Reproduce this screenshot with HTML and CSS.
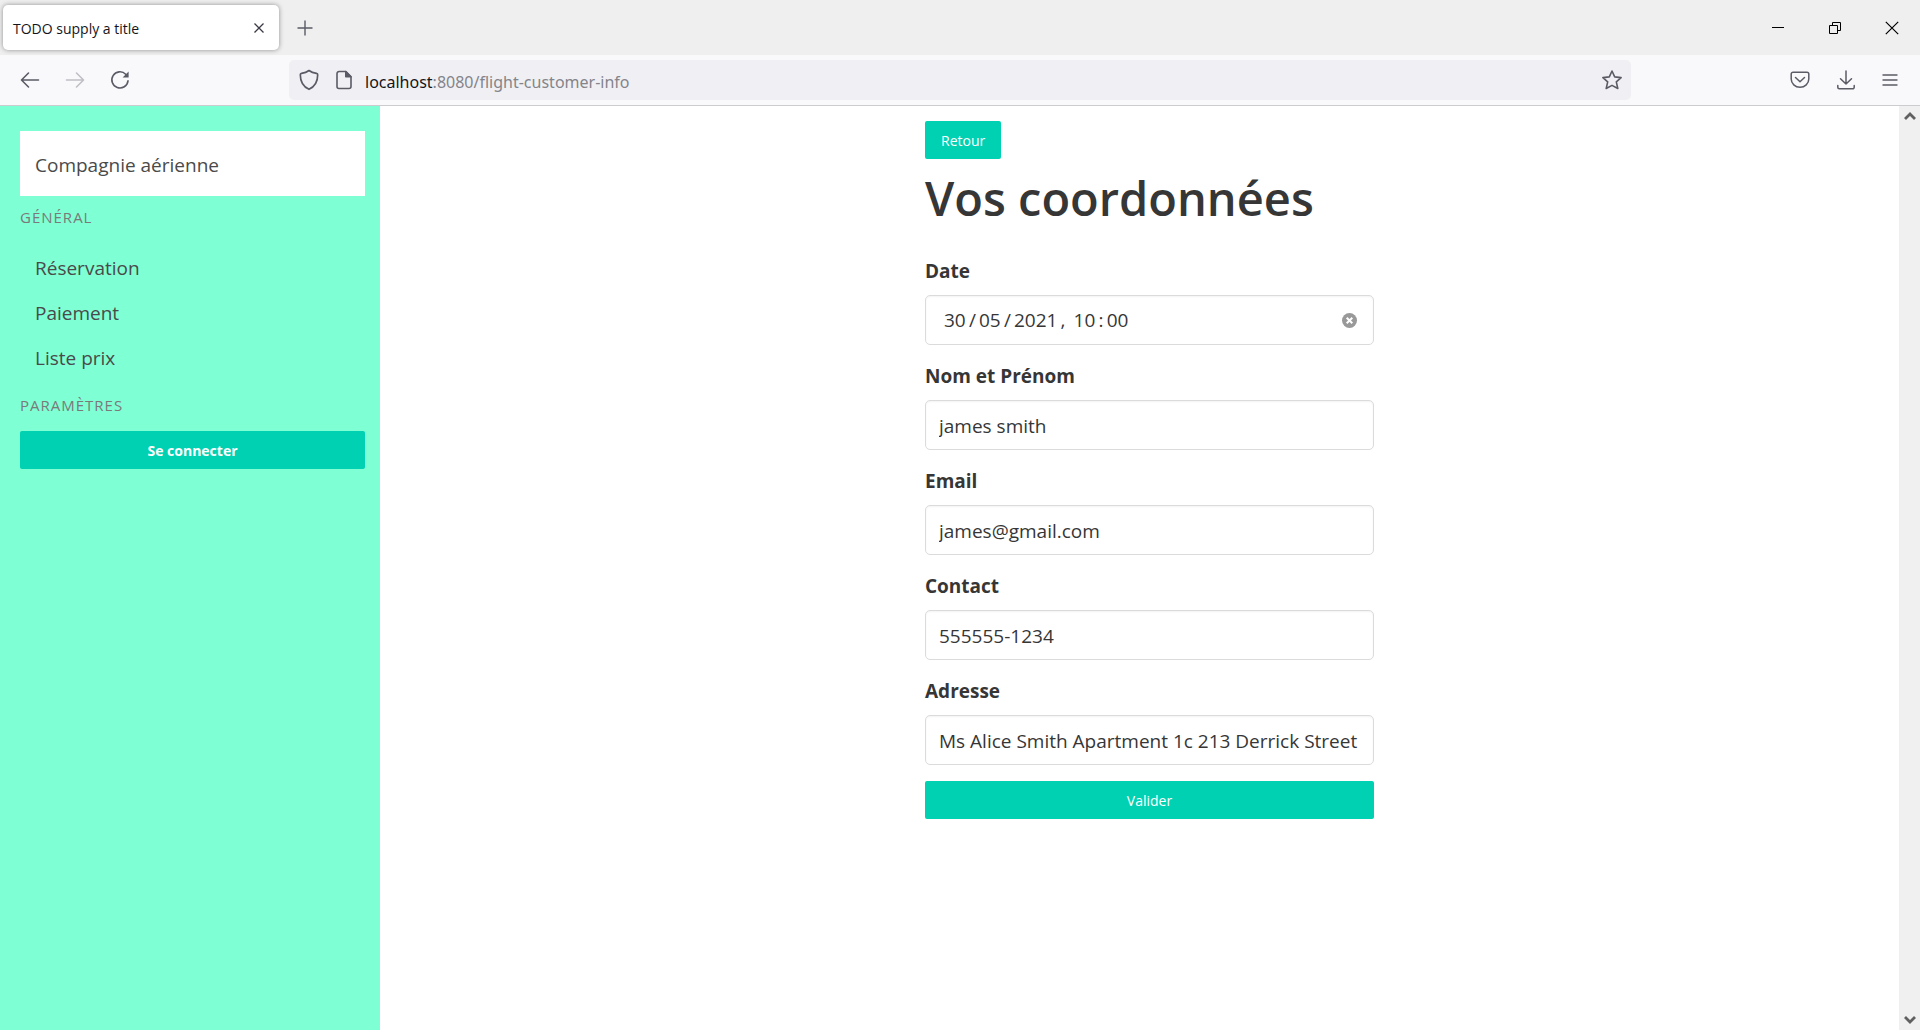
FILE: index.html
```html
<!DOCTYPE html>
<html lang="fr">
<head>
<meta charset="utf-8">
<meta name="viewport" content="width=device-width, initial-scale=1">
<title>TODO supply a title</title>
<link rel="stylesheet" href="styles.css">
</head>
<body>
<div class="browser">
  <header class="chrome">
    <div class="tab-bar">
      <div class="tab">
        <span class="tab-title">TODO supply a title</span>
        <button class="icon-button tab-close" type="button" aria-label="Fermer l'onglet">
          <svg width="12" height="12" viewBox="0 0 12 12" fill="none" stroke="#3a3944" stroke-width="1.3"><path d="M1.5 1.5l9 9M10.5 1.5l-9 9"/></svg>
        </button>
      </div>
      <button class="icon-button new-tab" type="button" aria-label="Nouvel onglet">
        <svg width="16" height="16" viewBox="0 0 16 16" fill="none" stroke="#5b5b66" stroke-width="1.4"><path d="M8 .5v15M.5 8h15"/></svg>
      </button>
      <div class="window-controls">
        <button class="icon-button" type="button" aria-label="Réduire">
          <svg width="12" height="12" viewBox="0 0 12 12" fill="none" stroke="#000"><path d="M0 5.500h12"/></svg>
        </button>
        <button class="icon-button" type="button" aria-label="Restaurer">
          <svg width="12" height="12" viewBox="0 0 12 12" fill="none" stroke="#000"><path d="M.5 3.500h8v8h-8zM3.500 3.500v-3h8v8h-3"/></svg>
        </button>
        <button class="icon-button" type="button" aria-label="Fermer">
          <svg width="14" height="14" viewBox="0 0 14 14" fill="none" stroke="#000" stroke-width="1.2"><path d="M.8.8l12.400 12.400M13.200.8L.8 13.200"/></svg>
        </button>
      </div>
    </div>
    <div class="toolbar">
      <div class="nav-buttons">
        <button class="icon-button" type="button" aria-label="Précédent">
          <svg width="20" height="20" viewBox="0 0 20 20" fill="none" stroke="#5b5b66" stroke-width="1.600" stroke-linecap="round" stroke-linejoin="round"><path d="M18.500 10H1.800M8.500 3L1.500 10l7 7"/></svg>
        </button>
        <button class="icon-button" type="button" aria-label="Suivant" disabled>
          <svg width="20" height="20" viewBox="0 0 20 20" fill="none" stroke="#bfbfc5" stroke-width="1.600" stroke-linecap="round" stroke-linejoin="round"><path d="M1.500 10h16.700M11.500 3l7 7-7 7"/></svg>
        </button>
        <button class="icon-button" type="button" aria-label="Actualiser">
          <svg width="20" height="20" viewBox="0 0 20 20" fill="none" stroke="#5b5b66" stroke-width="1.600" stroke-linecap="round"><path d="M18 10.800a8.100 8.100 0 1 1-2.300-6.600l1.300 1.300"/><path d="M18.600 1.500v6h-6z" fill="#5b5b66" stroke="none"/></svg>
        </button>
      </div>
      <div class="address-bar">
        <svg width="20" height="22" viewBox="0 0 20 22" fill="none" stroke="#5b5b66" stroke-width="1.700" stroke-linejoin="round"><path d="M10 1.500C8 3 4.800 4 2.500 4.300c-.8.100-1.200.6-1.200 1.400 0 7 3.100 12 8.700 14.600 5.600-2.600 8.700-7.600 8.700-14.600 0-.8-.4-1.300-1.200-1.400C15.200 4 12 3 10 1.500z"/></svg>
        <svg width="16" height="20" viewBox="0 0 16 20" fill="none" stroke="#5b5b66" stroke-width="1.600" stroke-linejoin="round"><path d="M9.800 1.500H3a2 2 0 0 0-2 2v13a2 2 0 0 0 2 2h10a2 2 0 0 0 2-2V6.700z"/><path d="M9.800 1.500v5.200H15z" fill="#5b5b66"/></svg>
        <div class="url" role="textbox" aria-label="Adresse"><span class="url-host">localhost</span>:8080/flight-customer-info</div>
        <button class="icon-button" type="button" aria-label="Marquer cette page">
          <svg width="20" height="20" viewBox="0 0 20 20" fill="none" stroke="#5b5b66" stroke-width="1.600" stroke-linejoin="round"><path d="M10 1l2.700 5.900 6.400.7-4.800 4.300 1.500 6.600L10 15.400l-5.800 3.100 1.500-6.600L.9 7.600l6.400-.7z"/></svg>
        </button>
      </div>
      <div class="tool-buttons">
        <button class="icon-button" type="button" aria-label="Pocket">
          <svg width="20" height="18" viewBox="0 0 20 18" fill="none" stroke="#5b5b66" stroke-width="1.500" stroke-linecap="round" stroke-linejoin="round"><path d="M3 1.300h14a1.800 1.800 0 0 1 1.800 1.800V8a8.800 8.300 0 0 1-17.600 0V3.100A1.800 1.800 0 0 1 3 1.300z"/><path d="M5.500 6.500L10 10.700l4.500-4.200"/></svg>
        </button>
        <button class="icon-button" type="button" aria-label="Téléchargements">
          <svg width="20" height="20" viewBox="0 0 20 20" fill="none" stroke="#5b5b66" stroke-width="1.500" stroke-linecap="round" stroke-linejoin="round"><path d="M10 1v13M4.500 8.700L10 14l5.500-5.300M1.800 15.500v1.800a1.500 1.500 0 0 0 1.500 1.500h13.400a1.500 1.500 0 0 0 1.500-1.500v-1.800"/></svg>
        </button>
        <button class="icon-button" type="button" aria-label="Menu">
          <svg width="16" height="14" viewBox="0 0 16 14" fill="none" stroke="#5b5b66" stroke-width="1.400" stroke-linecap="round"><path d="M1 2h14M1 7h14M1 12h14"/></svg>
        </button>
      </div>
    </div>
  </header>

  <div class="viewport">
    <aside class="sidebar">
      <a class="brand" href="#">Compagnie aérienne</a>
      <p class="menu-label">Général</p>
      <nav class="menu">
        <a href="#">Réservation</a>
        <a href="#">Paiement</a>
        <a href="#">Liste prix</a>
      </nav>
      <p class="menu-label">Paramètres</p>
      <button class="button login" type="button">Se connecter</button>
    </aside>

    <main class="main">
      <form class="customer-form">
        <button class="button back" type="button">Retour</button>
        <h1>Vos coordonnées</h1>
        <div class="field">
          <label for="date">Date</label>
          <div class="control date-control">
            <input id="date" type="text" value="30&#8201;/&#8201;05&#8201;/&#8201;2021&#8201;, &#8201;10&#8201;:&#8201;00">
            <button class="icon-button" type="button" aria-label="Effacer">
              <svg width="15" height="15" viewBox="0 0 15 15"><circle cx="7.500" cy="7.500" r="7.500" fill="#999"/><path d="M4.700 4.700l5.600 5.600M10.300 4.700l-5.600 5.600" stroke="#fff" stroke-width="2"/></svg>
            </button>
          </div>
        </div>
        <div class="field">
          <label for="name">Nom et Prénom</label>
          <input class="control" id="name" type="text" value="james smith">
        </div>
        <div class="field">
          <label for="email">Email</label>
          <input class="control" id="email" type="email" value="james@gmail.com">
        </div>
        <div class="field">
          <label for="contact">Contact</label>
          <input class="control" id="contact" type="text" value="555555-1234">
        </div>
        <div class="field">
          <label for="address">Adresse</label>
          <input class="control" id="address" type="text" value="Ms Alice Smith Apartment 1c 213 Derrick Street">
        </div>
        <button class="button submit" type="button">Valider</button>
      </form>
    </main>

    <div class="scrollbar" aria-hidden="true">
      <svg width="12" height="8" viewBox="0 0 12 8" fill="none" stroke="#606060" stroke-width="2.800"><path d="M1 7l5-5 5 5"/></svg>
      <svg width="12" height="8" viewBox="0 0 12 8" fill="none" stroke="#606060" stroke-width="2.800"><path d="M1 1l5 5 5-5"/></svg>
    </div>
  </div>
</div>
</body>
</html>
```
FILE: styles.css
```css
*,
*::before,
*::after {
  box-sizing: border-box;
}

body {
  margin: 0;
  font-family: "Open Sans", "Noto Sans", sans-serif;
  font-size: 19px;
  line-height: 30px;
  color: #363636;
  background: #fff;
}

button,
input {
  font: inherit;
  color: inherit;
}

svg {
  display: block;
  flex: none;
}

.browser {
  display: flex;
  flex-direction: column;
  min-height: 100vh;
}

.icon-button {
  display: flex;
  align-items: center;
  justify-content: center;
  flex: none;
  padding: 0;
  border: 0;
  background: none;
}

/* Browser chrome */

.tab-bar {
  display: flex;
  align-items: center;
  height: 55px;
  padding-left: 3px;
  background: #efefef;
}

.tab {
  display: flex;
  align-items: center;
  justify-content: space-between;
  width: 276px;
  height: 45px;
  padding: 0 14px 0 10px;
  border-radius: 5px;
  background: #fff;
  box-shadow: 0 0 5px rgba(0, 0, 0, 0.4);
}

.tab-title {
  padding-top: 2px;
  font-size: 14px;
  color: #15141a;
}

.new-tab {
  margin-left: 18px;
}

.window-controls {
  display: flex;
  margin-left: auto;
}

.window-controls .icon-button {
  width: 57px;
  height: 54px;
}

.toolbar {
  display: flex;
  align-items: center;
  height: 51px;
  border-bottom: 1px solid #ccccd0;
  background: #f9f9fb;
}

.nav-buttons {
  display: flex;
  gap: 25px;
  flex: 1 1 289px;
  padding-left: 20px;
}

.address-bar {
  display: flex;
  align-items: center;
  flex: 0 1 1342px;
  height: 40px;
  padding: 0 9px 0 10px;
  border-radius: 5px;
  background: #f0f0f4;
}

.address-bar > svg + svg {
  margin-left: 17px;
}

.url {
  flex: 1;
  margin-left: 13px;
  padding-top: 3px;
  font-family: "Noto Sans", "Open Sans", sans-serif;
  font-size: 16px;
  color: #84848a;
}

.url-host {
  color: #15141a;
}

.tool-buttons {
  display: flex;
  align-items: center;
  justify-content: flex-end;
  gap: 26px;
  flex: 1 1 289px;
  padding-right: 22px;
}

/* Page */

.viewport {
  display: flex;
  flex: 1;
}

.sidebar {
  flex: 0 0 20%;
  max-width: 380px;
  padding: 25px 15px 20px 20px;
  background: #7fffd4;
}

.brand {
  display: block;
  padding: 19px 15px 16px;
  background: #fff;
  color: #4a4a4a;
  text-decoration: none;
}

.menu-label {
  margin: 11px 0 15px;
  font-size: 15px;
  line-height: 20px;
  letter-spacing: 1px;
  text-transform: uppercase;
  color: #7a7a7a;
}

.menu {
  display: flex;
  flex-direction: column;
  padding: 3px 0 4px;
}

.menu + .menu-label {
  margin-bottom: 16px;
}

.menu a {
  padding: 8px 15px 7px;
  color: #4a4a4a;
  text-decoration: none;
}

.button {
  display: block;
  height: 38px;
  padding: 2px 16px 0;
  border: 0;
  border-radius: 2px;
  background: #00d1b2;
  color: #fff;
  font-size: 14px;
  line-height: 36px;
}

.login {
  width: 100%;
  font-weight: 700;
}

.main {
  flex: 1;
  padding: 15px 20px 15px 40px;
}

.customer-form {
  max-width: 449px;
  margin: 0 auto;
}

h1 {
  margin: 9px 0 28px;
  font-size: 47px;
  font-weight: 600;
  line-height: 60px;
}

.field {
  margin-bottom: 16px;
}

label {
  display: block;
  margin-bottom: 9px;
  font-weight: 700;
}

.control {
  display: block;
  width: 100%;
  height: 50px;
  padding: 2px 13px 0;
  border: 1px solid #dbdbdb;
  border-radius: 5px;
  background: #fff;
  box-shadow: inset 0 1px 2px rgba(10, 10, 10, 0.05);
}

.date-control {
  display: flex;
  align-items: center;
  padding: 0 16px 0 18px;
}

.date-control input {
  flex: 1;
  min-width: 0;
  padding: 0;
  border: 0;
  background: none;
}

.submit {
  width: 100%;
}

.scrollbar {
  display: flex;
  flex-direction: column;
  align-items: center;
  justify-content: space-between;
  width: 21px;
  padding: 6px 0;
  background: #f0f0f0;
}
```
